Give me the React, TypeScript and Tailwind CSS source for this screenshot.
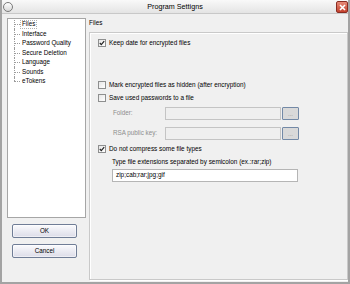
import React from "react";

const font = { fontFamily: '"Liberation Sans", Arial, sans-serif' };

function Check({ checked }: { checked?: boolean }) {
  return (
    <span className="w-[8px] h-[8px] shrink-0 border border-[#8e8f8f] bg-gradient-to-br from-[#e6e6e6] to-white flex items-center justify-center">
      {checked && (
        <svg width="6" height="6" viewBox="0 0 6 6">
          <path d="M0.8 3 L2.3 4.6 L5.2 1.2" stroke="#222" strokeWidth="1.2" fill="none" />
        </svg>
      )}
    </span>
  );
}

function TreeItem({ label, last, selected }: { label: string; last?: boolean; selected?: boolean }) {
  return (
    <div className="flex h-[9.5px] items-stretch">
      <div className="relative w-[6px] ml-[6px]">
        <span className={`absolute left-0 top-0 border-l border-dotted border-[#9c9c9c] ${last ? "h-1/2" : "h-full"}`} />
        <span className="absolute left-0 top-1/2 w-[6px] border-t border-dotted border-[#9c9c9c]" />
      </div>
      <span
        className={`flex items-center text-[6.3px] leading-none px-px ${selected ? "border border-dotted border-[#b0b0b0]" : "border border-transparent"}`}
      >
        {label}
      </span>
    </div>
  );
}

function WinButton({ label }: { label: string }) {
  return (
    <button className="w-[65px] h-[14px] rounded-[2px] border border-[#707d96] bg-gradient-to-b from-[#fbfbfd] to-[#dcdce8] text-[6.3px] leading-none text-black shadow-[inset_0_0_0_1px_#ffffff80]">
      {label}
    </button>
  );
}

function PathRow({ label }: { label: string }) {
  return (
    <div className="flex items-center h-[13px] ml-[15px]">
      <span className="w-[52px] text-[6.3px] leading-none text-[#8d8d8d]">{label}</span>
      <div className="w-[116px] h-full border border-[#c4c4c4] bg-[#efefef]" />
      <div className="w-[17px] h-full ml-px rounded-[1px] border border-[#7389a6] bg-[#d9d9d9] flex items-center justify-center text-[6px] leading-none text-[#8a8a8a]">
        ...
      </div>
    </div>
  );
}

export default function App() {
  return (
    <div style={font} className="w-[350px] h-[284px] flex flex-col bg-[#f0f0f0] border-l-2 border-r-2 border-b-2 border-[#a3a3a3] text-black overflow-hidden">
      <div className="relative h-[14px] shrink-0 flex items-center justify-center bg-gradient-to-b from-[#f9f9f9] to-[#e4e4e4] border-b border-[#c8c8c8]">
        <span className="absolute left-[1px] top-[2px] w-[10px] h-[10px] rounded-full border border-[#7a7a7a] bg-gradient-to-b from-white to-[#d8d8d8]" />
        <span className="text-[7.2px] leading-none">Program Settigns</span>
        <span className="absolute right-0 top-[1px] w-[12px] h-[12px] rounded-[2px] border border-[#8a2c22] bg-gradient-to-b from-[#e68a78] to-[#c4402c] flex items-center justify-center">
          <svg width="7" height="7" viewBox="0 0 7 7">
            <path d="M1 1 L6 6 M6 1 L1 6" stroke="white" strokeWidth="1.6" />
          </svg>
        </span>
      </div>
      <div className="flex flex-1 min-h-0">
        <div className="w-[87px] shrink-0 flex flex-col">
          <div className="ml-[5px] mt-[4px] w-[79px] h-[200px] border border-[#a6a6a6] bg-white pt-[0.5px]">
            <TreeItem label="Files" selected />
            <TreeItem label="Interface" />
            <TreeItem label="Password Quality" />
            <TreeItem label="Secure Deletion" />
            <TreeItem label="Language" />
            <TreeItem label="Sounds" />
            <TreeItem label="eTokens" last />
          </div>
          <div className="ml-[10px] mt-[6px] flex flex-col gap-[6px]">
            <WinButton label="OK" />
            <WinButton label="Cancel" />
          </div>
        </div>
        <div className="flex-1 flex flex-col">
          <div className="h-[18px] flex items-center text-[6.4px] leading-none">Files</div>
          <div className="flex-1 mb-[2px] border border-[#c9c9c9] shadow-[inset_1px_1px_0_#ffffff,1px_1px_0_#ffffff] pl-[8px] flex flex-col text-[6.4px] leading-none">
            <div className="mt-[5px] h-[10px] flex items-center gap-[3px]">
              <Check checked />
              <span>Keep date for encrypted files</span>
            </div>
            <div className="mt-[32px] h-[10px] flex items-center gap-[3px]">
              <Check />
              <span>Mark encrypted files as hidden (after encryption)</span>
            </div>
            <div className="mt-[3px] h-[10px] flex items-center gap-[3px]">
              <Check />
              <span>Save used passwords to a file</span>
            </div>
            <div className="mt-[4px]">
              <PathRow label="Folder:" />
            </div>
            <div className="mt-[7px]">
              <PathRow label="RSA public key:" />
            </div>
            <div className="mt-[4px] h-[10px] flex items-center gap-[3px]">
              <Check checked />
              <span>Do not compress some file types</span>
            </div>
            <div className="mt-[3px] h-[10px] flex items-center ml-[14px]">
              Type file extensions separated by semicolon (ex.:rar;zip)
            </div>
            <div className="mt-[2px] ml-[14px] w-[186px] h-[13px] border border-[#b5b5b5] bg-white flex items-center px-[3px]">
              zip;cab;rar;jpg;gif
            </div>
          </div>
        </div>
      </div>
    </div>
  );
}
